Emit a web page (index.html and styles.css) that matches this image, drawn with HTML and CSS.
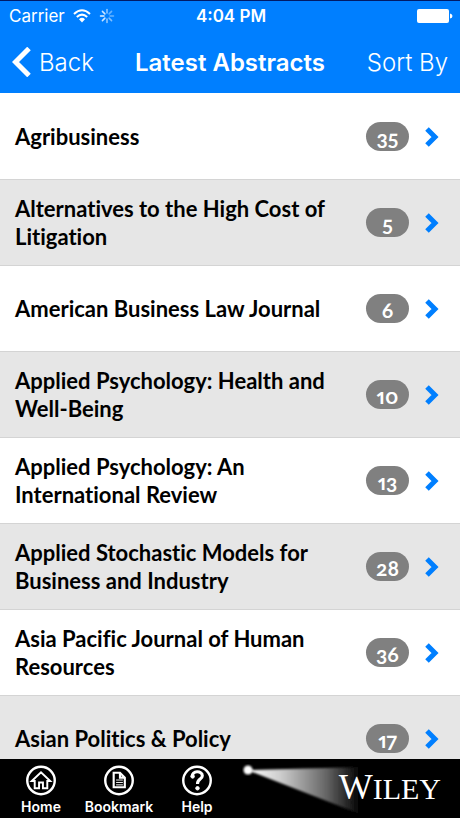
FILE: index.html
```html
<!DOCTYPE html>
<html lang="en">
<head>
  <meta charset="UTF-8">
  <meta name="viewport" content="width=device-width, initial-scale=1">
  <title>Latest Abstracts</title>
  <link rel="stylesheet" href="styles.css">
</head>
<body>
  <header>
    <div class="status">
      <div class="carrier">
        <span>Carrier</span>
        <svg class="wifi" viewBox="0 0 18 14" width="18" height="14">
          <path d="M1 5Q9-2.500 17 5M3.800 8Q9 3.300 14.200 8" fill="none" stroke="#fff" stroke-width="2"/>
          <path d="M6 10.200Q9 7.500 12 10.200L9 13.500Z" fill="#fff"/>
        </svg>
        <svg class="spinner" viewBox="-8 -8 16 16" width="16" height="16" stroke="#fff" stroke-width="1.500" stroke-linecap="round">
          <path d="M0-3V-6.500" opacity=".6"/>
          <path d="M2.100-2.100L4.600-4.600" opacity=".4"/>
          <path d="M3 0H6.500" opacity=".4"/>
          <path d="M2.100 2.100L4.600 4.600" opacity=".5"/>
          <path d="M0 3V6.500" opacity=".6"/>
          <path d="M-2.100 2.100L-4.600 4.600" opacity=".8"/>
          <path d="M-3 0H-6.500" opacity=".9"/>
          <path d="M-2.100-2.100L-4.600-4.600" opacity=".8"/>
        </svg>
      </div>
      <div class="time">4:04 PM</div>
      <svg class="battery" viewBox="0 0 36 14" width="36" height="14">
        <rect width="32" height="14" rx="2" fill="#fff"/>
        <path d="M33 4.500Q35.500 5 35.500 7T33 9.500Z" fill="#fff"/>
      </svg>
    </div>
    <div class="navbar">
      <button class="back">
        <svg viewBox="0 0 20 30" width="20" height="30"><path d="M17 1.500L3.500 15L17 28.500" fill="none" stroke="#fff" stroke-width="5"/></svg>
        Back
      </button>
      <h1>Latest Abstracts</h1>
      <button class="sort">Sort By</button>
    </div>
  </header>

  <main id="journals"></main>

  <footer>
    <nav>
      <a class="tab home" href="#home">
        <svg viewBox="0 0 32 32" width="32" height="32" fill="none" stroke="#fff">
          <circle cx="16" cy="16" r="14.200" stroke-width="2.500"/>
          <path d="M6.500 16.500L16 7.500L25.500 16.500H22.500V24H18V18H14V24H9.500V16.500Z" stroke-width="2"/>
        </svg>
        Home
      </a>
      <a class="tab bookmark" href="#bookmark">
        <svg viewBox="0 0 32 32" width="32" height="32" fill="none" stroke="#fff">
          <circle cx="16" cy="16" r="14.200" stroke-width="2.500"/>
          <path d="M10.500 8H17L22 13V23H10.500ZM17 8V13H22" stroke-width="2.200"/>
          <path d="M13 15.500H20M13 18H20M13 20.500H20" stroke-width="1"/>
        </svg>
        Bookmark
      </a>
      <a class="tab help" href="#help">
        <svg viewBox="0 0 32 32" width="32" height="32" fill="none" stroke="#fff">
          <circle cx="16" cy="16" r="14.200" stroke-width="2.500"/>
          <path d="M11 12C10.500 5.500 21.500 5.500 21.500 11C21.500 15 16.500 14 16.500 19.500" stroke-width="3.200"/>
          <circle cx="11.500" cy="11.800" r="1.800" fill="#fff"/>
          <circle cx="16.500" cy="24" r="1.800" fill="#fff"/>
        </svg>
        Help
      </a>
    </nav>
    <div class="brand">
      <svg class="beam" viewBox="0 0 120 56" width="120" height="56">
        <defs>
          <linearGradient id="light">
            <stop offset="0" stop-color="#fff"/>
            <stop offset=".3" stop-color="#ccc"/>
            <stop offset=".7" stop-color="#666"/>
            <stop offset="1" stop-color="#000"/>
          </linearGradient>
          <filter id="soft"><feGaussianBlur stdDeviation="0.800"/></filter>
        </defs>
        <path d="M5 10L118 7V54Z" fill="url(#light)" filter="url(#soft)"/>
        <circle cx="6" cy="10" r="4.500" fill="#fff" filter="url(#soft)"/>
      </svg>
      <span class="wordmark"><span class="initial">W</span>ILEY</span>
    </div>
  </footer>

  <script>
    const journals = [
      { title: 'Agribusiness', count: 35 },
      { title: 'Alternatives to the High Cost of Litigation', count: 5 },
      { title: 'American Business Law Journal', count: 6 },
      { title: 'Applied Psychology: Health and Well-Being', count: 10 },
      { title: 'Applied Psychology: An International Review', count: 13 },
      { title: 'Applied Stochastic Models for Business and Industry', count: 28 },
      { title: 'Asia Pacific Journal of Human Resources', count: 36 },
      { title: 'Asian Politics & Policy', count: 17 }
    ];

    const list = document.getElementById('journals');
    journals.forEach(journal => {
      const row = document.createElement('a');
      row.className = 'row';
      row.href = '#journal';
      row.innerHTML = `
        <span class="title"></span>
        <span class="count">${journal.count}</span>
        <svg viewBox="0 0 14 20" width="14" height="20"><path d="M2 2L10 10L2 18" fill="none" stroke="#007fff" stroke-width="5"/></svg>
      `;
      row.querySelector('.title').textContent = journal.title;
      list.appendChild(row);
    });
  </script>
</body>
</html>
```
FILE: styles.css
```css
* {
  box-sizing: border-box;
}
body {
  margin: 0;
  height: 100vh;
  display: flex;
  flex-direction: column;
  background: #fff;
  color: #000;
  font-family: Inter, "Liberation Sans", sans-serif;
}
header {
  background: #007fff;
  border-top: 1px solid #001a66;
  color: #fff;
}
.status {
  display: grid;
  grid-template-columns: 1fr auto 1fr;
  align-items: center;
  height: 30px;
  padding: 0 7px 0 9px;
  font-size: 17px;
}
.carrier {
  display: flex;
  align-items: center;
  gap: 8px;
}
.time {
  font-weight: 600;
}
.battery {
  justify-self: end;
}
.navbar {
  display: grid;
  grid-template-columns: 1fr auto 1fr;
  align-items: center;
  height: 62px;
  padding: 0 12px;
}
.navbar button {
  display: flex;
  align-items: center;
  gap: 7px;
  padding: 0;
  border: 0;
  background: none;
  color: #fff;
  font-family: inherit;
  font-size: 24px;
  font-weight: 300;
  white-space: nowrap;
}
.navbar .sort {
  justify-self: end;
}
h1 {
  margin: 0;
  font-size: 24px;
  font-weight: 600;
}
main {
  flex: 1;
  min-height: 0;
  padding-top: 1px;
  overflow: hidden;
}
.row {
  display: flex;
  align-items: center;
  height: 86px;
  padding: 0 21px 0 15px;
  border-bottom: 1px solid #d4d4d4;
  color: #000;
  text-decoration: none;
}
.row:nth-child(even) {
  background: #e6e6e6;
}
.title {
  flex: 1;
  padding-right: 24px;
  font-family: Lato, sans-serif;
  font-size: 22px;
  font-variant-ligatures: no-common-ligatures;
  font-weight: 700;
  line-height: 28px;
}
.count {
  width: 43px;
  height: 29px;
  margin-right: 16px;
  border-radius: 15px;
  background: #808080;
  color: #fff;
  font-family: Lato, sans-serif;
  font-size: 21px;
  font-variant-numeric: oldstyle-nums proportional-nums;
  font-weight: 700;
  line-height: 32px;
  text-align: center;
}
footer {
  display: flex;
  justify-content: space-between;
  height: 59px;
  background: #000;
  color: #fff;
}
nav {
  display: flex;
  padding-left: 2px;
}
.tab {
  display: flex;
  flex-direction: column;
  align-items: center;
  width: 78px;
  padding-top: 6px;
  color: #fff;
  font-size: 14px;
  font-weight: 600;
  line-height: 22px;
  text-decoration: none;
}
.brand {
  position: relative;
  width: 218px;
  padding: 8px 19px 0 0;
  text-align: right;
}
.beam {
  position: absolute;
  top: 1px;
  left: 0;
}
.wordmark {
  position: relative;
  font-family: "Liberation Serif", serif;
  font-size: 30px;
  line-height: 40px;
}
.initial {
  font-size: 36px;
}
```
